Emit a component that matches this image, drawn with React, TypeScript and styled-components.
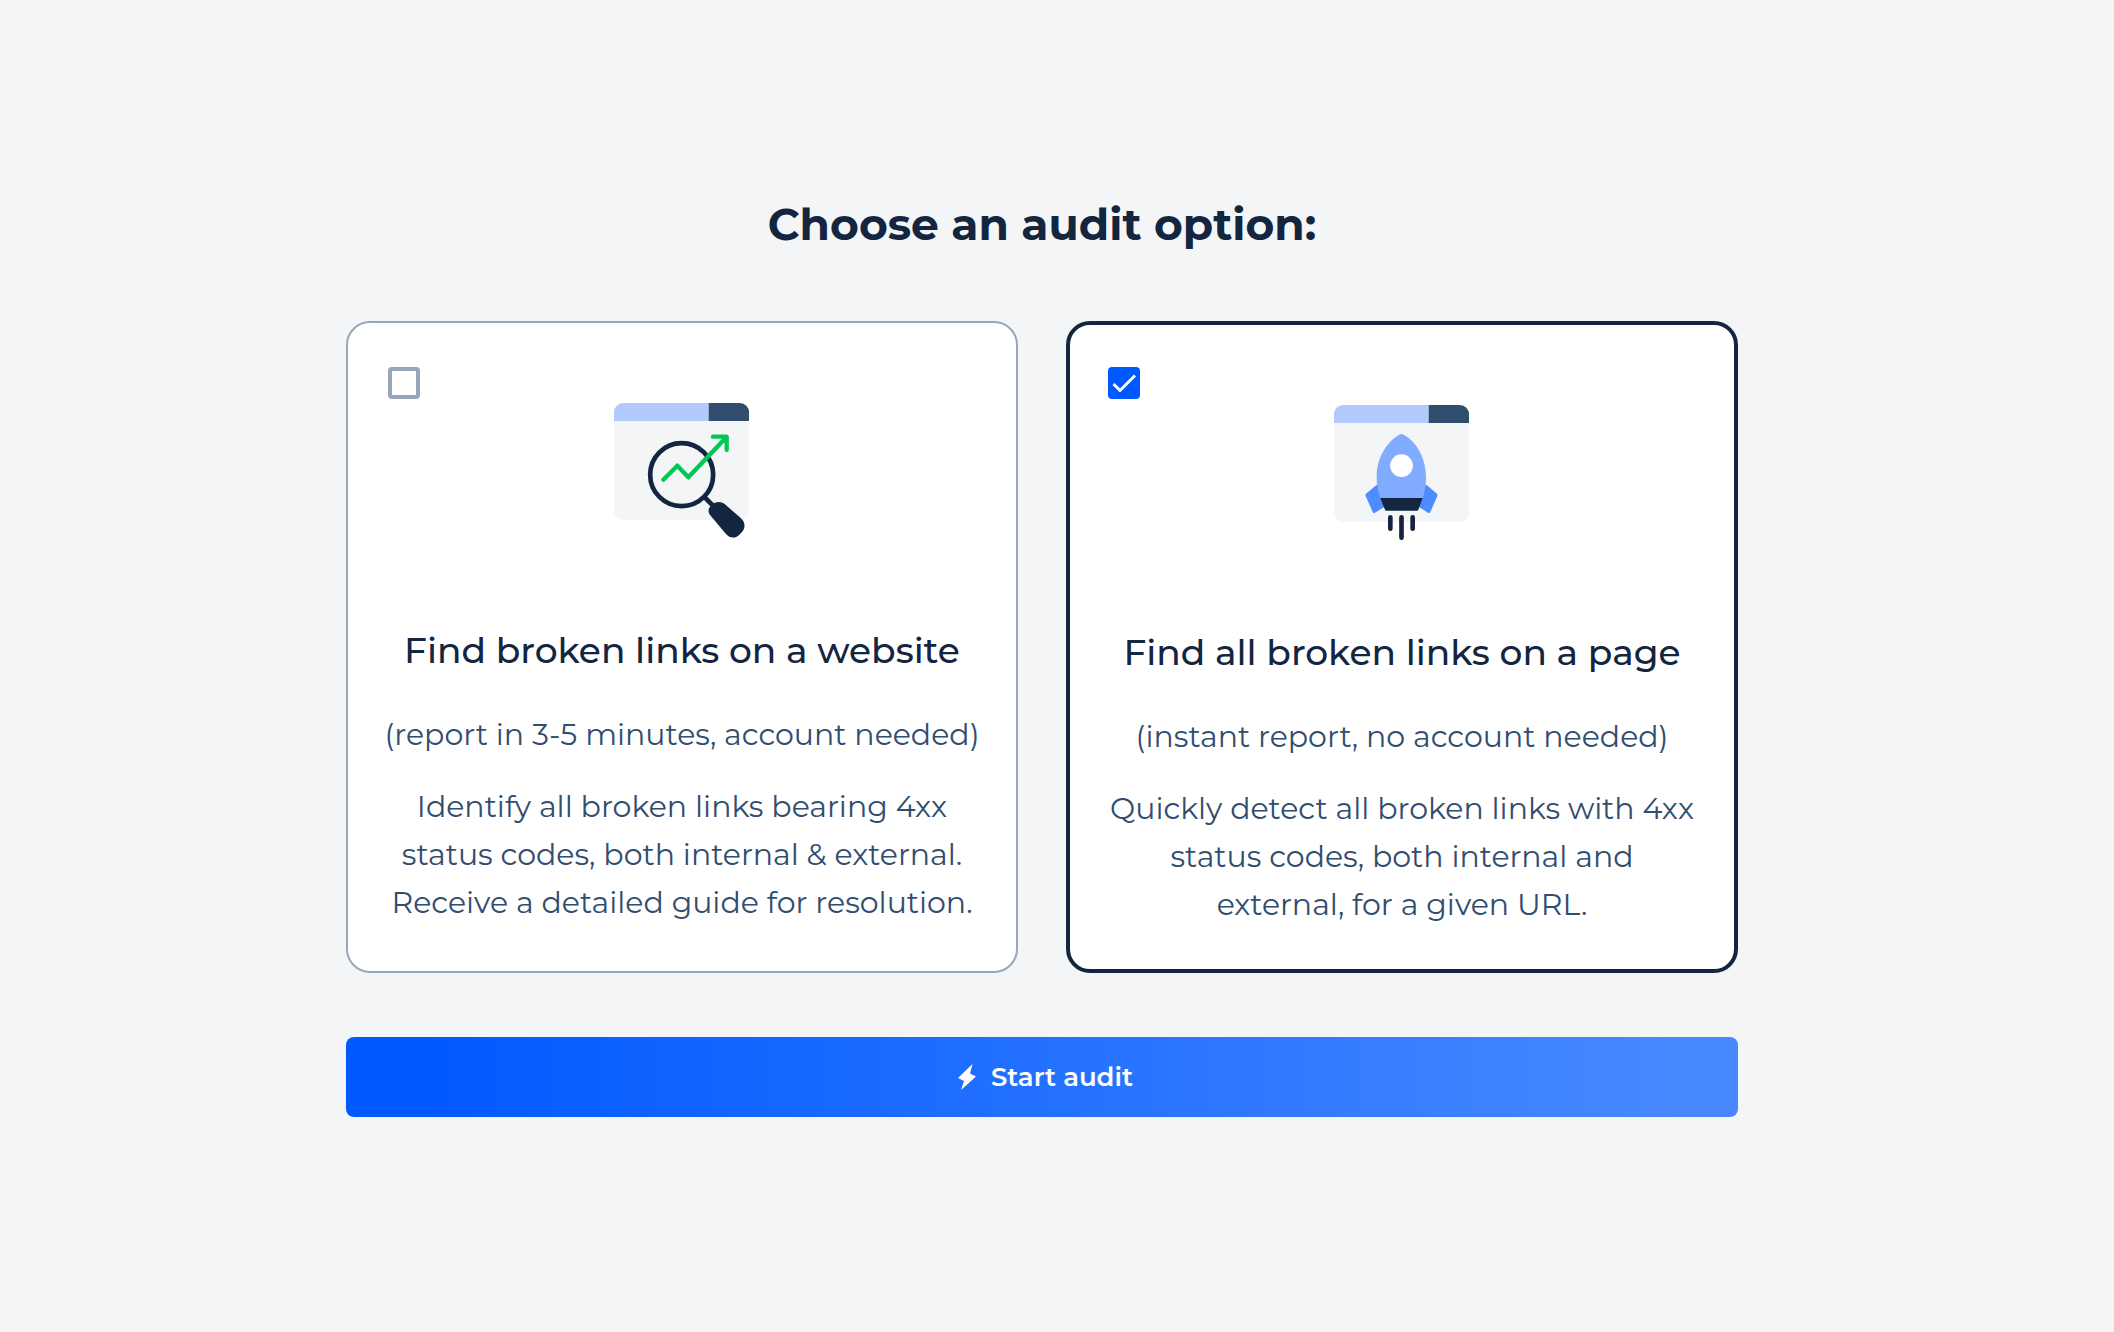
import React, { useState } from 'react';
import styled, { createGlobalStyle } from 'styled-components';

const color = {
  page: '#f3f5f7',
  ink: '#13253f',
  text: '#314d70',
  muted: '#97a6ba',
  accent: '#0059ff',
};

const GlobalStyle = createGlobalStyle`
  *, *::before, *::after { box-sizing: border-box; }
  body {
    margin: 0;
    background: ${color.page};
    color: ${color.ink};
    font-family: Montserrat, Inter, sans-serif;
  }
`;

const Page = styled.main`
  display: flex;
  justify-content: center;
  min-height: 100vh;
  padding: 196px 46px 48px 16px;
`;

const Content = styled.form`
  width: 100%;
  max-width: 1392px;
`;

const Heading = styled.h1`
  margin: 0 0 69px;
  font-size: 44px;
  line-height: 56px;
  font-weight: 700;
  text-align: center;
`;

const Options = styled.div`
  display: grid;
  grid-template-columns: repeat(auto-fit, minmax(min(100%, 480px), 1fr));
  gap: 48px;
`;

const Card = styled.section<{ $selected: boolean }>`
  --edge: ${(p) => (p.$selected ? '4px' : '2px')};
  position: relative;
  display: flex;
  flex-direction: column;
  align-items: center;
  padding: 56px 36px 40px;
  border: var(--edge) solid ${(p) => (p.$selected ? color.ink : color.muted)};
  border-radius: 24px;
  background: #fff;
  text-align: center;
`;

const Tick = styled.span`
  position: absolute;
  top: calc(46px - var(--edge));
  left: calc(42px - var(--edge));
  width: 32px;
  height: 32px;

  svg {
    position: absolute;
    inset: 0;
    pointer-events: none;
  }
`;

const TickInput = styled.input`
  appearance: none;
  display: block;
  width: 32px;
  height: 32px;
  margin: 0;
  border: 4px solid ${color.muted};
  border-radius: 4px;
  background: #fff;
  cursor: pointer;

  &:checked {
    border-color: ${color.accent};
    background: ${color.accent};
  }
`;

const Title = styled.h2`
  margin: 67px 0 37px;
  font-size: 36px;
  line-height: 48px;
  font-weight: 500;

  label { cursor: pointer; }
`;

const Text = styled.p`
  margin: 0;
  color: ${color.text};
  font-size: 30px;
  line-height: 48px;

  & + & { margin-top: 24px; }
`;

const StartButton = styled.button`
  display: flex;
  align-items: center;
  justify-content: center;
  gap: 8px;
  width: 100%;
  height: 80px;
  margin-top: 64px;
  border: 0;
  border-radius: 8px;
  background: linear-gradient(90deg, #0059ff 5%, #4788ff 95%);
  color: #fff;
  font: inherit;
  font-size: 26px;
  font-weight: 600;
  cursor: pointer;
`;

const BrowserWindow = () => (
  <>
    <path d="M72 110H477V393a27 27 0 0 1-27 27H99a27 27 0 0 1-27-27Z" fill="#f3f5f7" />
    <path d="M99 69H356V123H72V96a27 27 0 0 1 27-27Z" fill="#b3caff" />
    <path d="M356 69H450a27 27 0 0 1 27 27V123H356Z" fill="#314d6e" />
  </>
);

const MagnifierArt = () => (
  <svg width="180" height="180" viewBox="6 -3 540 540" fill="none" aria-hidden="true">
    <BrowserWindow />
    <circle cx="275" cy="284" r="94.5" stroke={color.ink} strokeWidth="14" />
    <path d="M342 350L370 378" stroke={color.ink} strokeWidth="14" />
    <path
      d="M365 375C376 364 392 362 405 373L453 415C466 427 467 443 456 456L448 464C436 476 420 476 408 462L362 407C353 396 353 386 365 375Z"
      fill={color.ink}
    />
    <path
      d="M220 299L262 257L295 292L409 172M369 170H410V210"
      stroke="#00c853"
      strokeWidth="13"
      strokeLinecap="round"
      strokeLinejoin="round"
    />
  </svg>
);

const RocketArt = () => (
  <svg width="180" height="180" viewBox="6 -3 540 540" fill="none" aria-hidden="true">
    <BrowserWindow />
    <g transform="translate(0 -6)">
      <path d="M202 313L168 341Q165 344 167 348L188 396Q190 401 195 398L224 380Z" fill="#4f8cff" />
      <path d="M347 313L381 341Q384 344 382 348L361 396Q359 401 354 398L325 380Z" fill="#4f8cff" />
      <path
        d="M268 164Q275 160 281 164C323 187 348 238 348 290C348 314 344 337 338 354H211C204 337 200 314 200 290C200 238 227 187 268 164Z"
        fill="#80abff"
      />
      <path d="M211 354H338L325 389Q324 392 321 392H229Q226 392 225 389Z" fill={color.ink} />
      <circle cx="274.500" cy="257" r="34" fill="#fff" />
      <path
        d="M241 412V446M274.500 412V473M308 412V446"
        stroke={color.ink}
        strokeWidth="14"
        strokeLinecap="round"
      />
    </g>
  </svg>
);

const options = [
  {
    id: 'website',
    title: 'Find broken links on a website',
    note: '(report in 3-5 minutes, account needed)',
    description:
      'Identify all broken links bearing 4xx status codes, both internal & external. Receive a detailed guide for resolution.',
    Art: MagnifierArt,
  },
  {
    id: 'page',
    title: 'Find all broken links on a page',
    note: '(instant report, no account needed)',
    description:
      'Quickly detect all broken links with 4xx status codes, both internal and external, for a given URL.',
    Art: RocketArt,
  },
];

export default function App() {
  const [selected, setSelected] = useState('page');

  return (
    <>
      <GlobalStyle />
      <Page>
        <Content onSubmit={(e) => e.preventDefault()}>
          <Heading>Choose an audit option:</Heading>
          <Options>
            {options.map(({ id, title, note, description, Art }) => (
              <Card key={id} $selected={selected === id}>
                <Tick>
                  <TickInput
                    type="checkbox"
                    id={id}
                    checked={selected === id}
                    onChange={() => setSelected(id)}
                  />
                  {selected === id && (
                    <svg width="32" height="32" viewBox="0 0 32 32" fill="none" aria-hidden="true">
                      <path d="M5.500 17L12 23.500L27 8.500" stroke="#fff" strokeWidth="3" />
                    </svg>
                  )}
                </Tick>
                <Art />
                <Title>
                  <label htmlFor={id}>{title}</label>
                </Title>
                <Text>{note}</Text>
                <Text>{description}</Text>
              </Card>
            ))}
          </Options>
          <StartButton type="submit">
            <svg width="32" height="26" viewBox="-7 0 32 26" aria-hidden="true">
              <path d="M14.500 0L12 9.500L18 12.500L3 26L6 17L0 14Z" fill="#fff" />
            </svg>
            Start audit
          </StartButton>
        </Content>
      </Page>
    </>
  );
}
